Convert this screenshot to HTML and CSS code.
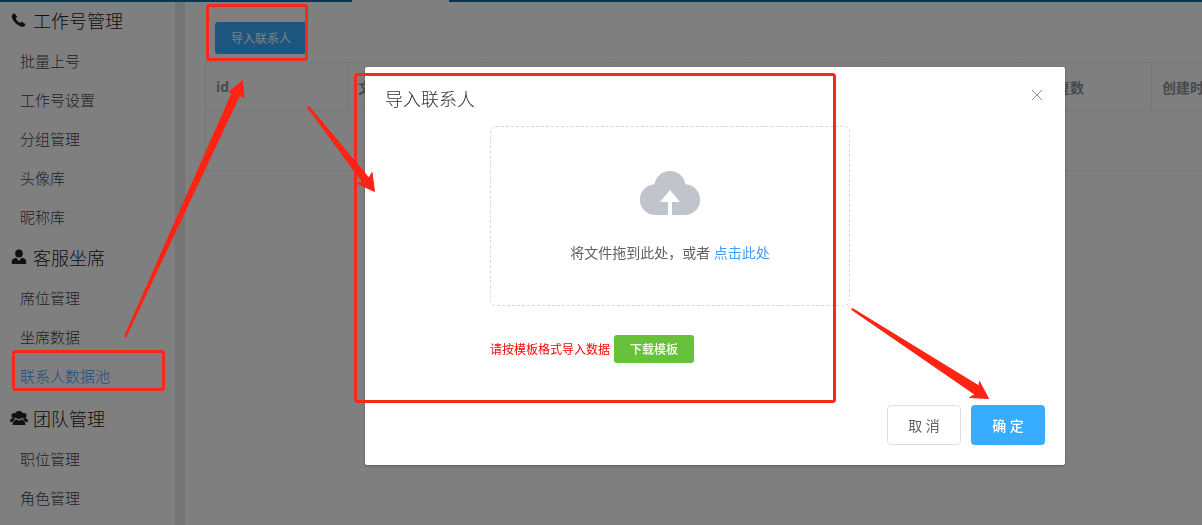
FILE: index.html
```html
<!DOCTYPE html>
<html lang="zh-CN">
<head>
    <meta charset="UTF-8">
    <meta name="viewport" content="width=device-width, initial-scale=1.0">
    <title>联系人数据池</title>
    <link rel="stylesheet" href="styles.css">
</head>
<body>
    <header class="topbar"><div class="topbar-tab"></div></header>
    <div class="layout">
        <nav class="sidebar">
            <section class="menu-group">
                <h2 class="menu-title">
                    <svg class="menu-icon" viewBox="0 0 18 18"><path d="M2.500 3.500 4.500 2l2.600 3.800-1.300 1.600c.8 2 2.200 3.300 4.300 4.400l1.800-1 3.800 2.400-1.400 2c-1.200.9-2.700.8-4.200.1C6.400 13.500 3.300 10.600 2.100 7 1.700 5.500 1.700 4.500 2.500 3.500z"/></svg>
                    工作号管理
                </h2>
                <a class="menu-item" href="#">批量上号</a>
                <a class="menu-item" href="#">工作号设置</a>
                <a class="menu-item" href="#">分组管理</a>
                <a class="menu-item" href="#">头像库</a>
                <a class="menu-item" href="#">昵称库</a>
            </section>
            <section class="menu-group">
                <h2 class="menu-title">
                    <svg class="menu-icon" viewBox="0 0 18 18"><ellipse cx="9" cy="5.500" rx="3.800" ry="4"/><path d="M1.800 16v-2.500c0-2 2-3.200 4.300-3.700L9 13l2.900-3.200c2.300.5 4.300 1.700 4.300 3.700V16z"/></svg>
                    客服坐席
                </h2>
                <a class="menu-item" href="#">席位管理</a>
                <a class="menu-item" href="#">坐席数据</a>
                <a class="menu-item active" href="#">联系人数据池</a>
            </section>
            <section class="menu-group">
                <h2 class="menu-title">
                    <svg class="menu-icon" viewBox="0 0 18 18"><circle cx="9" cy="6" r="4"/><path d="M2.500 16c0-3.200 1.700-4.800 4.300-5.400L9 11.800l2.200-1.200c2.600.6 4.300 2.200 4.300 5.400z"/><circle cx="4" cy="6.500" r="2.600"/><circle cx="14" cy="6.500" r="2.600"/><path d="M0 13c0-2.400.8-3.500 3-4l2.800 1.200C4 10.800 3 11.700 2.500 13zM18 13c0-2.400-.8-3.500-3-4l-2.800 1.200c1.800.6 2.800 1.500 3.300 2.800z"/></svg>
                    团队管理
                </h2>
                <a class="menu-item" href="#">职位管理</a>
                <a class="menu-item" href="#">角色管理</a>
            </section>
        </nav>

        <main class="content">
            <div class="toolbar">
                <button type="button" class="btn btn-import">导入联系人</button>
            </div>
            <div class="table-wrap">
                <table class="data-table">
                    <thead>
                        <tr>
                            <th class="col-id">id</th>
                            <th>文</th>
                            <th></th>
                            <th></th>
                            <th></th>
                            <th></th>
                            <th>去重复数</th>
                            <th>创建时间</th>
                        </tr>
                    </thead>
                    <tbody>
                        <tr><td colspan="8"></td></tr>
                    </tbody>
                </table>
            </div>
        </main>
    </div>

    <div class="overlay">
        <div class="modal" role="dialog" aria-labelledby="modalTitle">
            <div class="modal-header">
                <h3 class="modal-title" id="modalTitle">导入联系人</h3>
                <button type="button" class="modal-close" aria-label="关闭">
                    <svg viewBox="0 0 12 12"><path d="M1 1l10 10M11 1L1 11"/></svg>
                </button>
            </div>
            <div class="modal-body">
                <div class="upload-box">
                    <svg class="upload-icon" viewBox="0 0 60 46"><path d="M28 45H16A15.400 15.400 0 0 1 14.500 14.200 15.700 15.700 0 0 1 45.500 14.200 15.400 15.400 0 0 1 44 45H32V32h8L30 20 20 32h8z"/></svg>
                    <p class="upload-text">将文件拖到此处，或者 <a href="#">点击此处</a></p>
                </div>
                <div class="template-row">
                    <span class="template-tip">请按模板格式导入数据</span>
                    <button type="button" class="btn btn-template">下载模板</button>
                </div>
            </div>
            <div class="modal-footer">
                <button type="button" class="btn btn-cancel">取 消</button>
                <button type="button" class="btn btn-confirm">确 定</button>
            </div>
        </div>
    </div>

    <!-- step markers -->
    <svg class="guide" width="1202" height="525" viewBox="0 0 1202 525">
        <g class="guide-box">
            <rect x="207.500" y="5.500" width="99" height="54" rx="2"/>
            <rect x="13.500" y="351.500" width="150" height="38" rx="2"/>
            <rect x="355.500" y="74.500" width="479" height="327" rx="2"/>
        </g>
        <g class="guide-arrow">
            <path d="M124.500 336.500 232 93l-3-1 13.500-11.500 1.500 17-4.500-2L126 337z"/>
            <path d="M307.500 107.500 309 106.500 369 178l3-5.500 2.500 19-17-8 5-1.500z"/>
            <path d="M851.500 309.500 852.500 308.500 979 386l.5-4.500 9 17-19-1 5.500-3z"/>
        </g>
    </svg>
</body>
</html>
```
FILE: styles.css
```css
* {
    box-sizing: border-box;
}
body {
    margin: 0;
    height: 100vh;
    overflow: hidden;
    display: flex;
    flex-direction: column;
    background-color: #fff;
    color: #606266;
    font-family: "Open Sans", "Noto Sans CJK SC", sans-serif;
    font-size: 14px;
}
a {
    color: #409eff;
    text-decoration: none;
}
.topbar {
    flex: none;
    height: 2px;
    padding-left: 352px;
    background-color: #0070b8;
}
.topbar-tab {
    width: 97px;
    height: 2px;
    background-color: #fff;
}
.layout {
    flex: 1;
    min-height: 0;
    display: flex;
}
.sidebar {
    flex: none;
    width: 185px;
    border-right: 10px solid #e8e8e8;
    overflow: hidden;
    font-weight: 300;
}
.menu-group + .menu-group {
    margin-top: 2px;
}
.menu-title {
    display: flex;
    align-items: center;
    gap: 5px;
    height: 40px;
    margin: 0;
    padding: 0 0 4px 10px;
    font-size: 18px;
    font-weight: 300;
    color: #222;
}
.menu-icon {
    width: 18px;
    height: 18px;
    fill: #222;
}
.menu-item {
    display: block;
    padding-left: 20px;
    font-size: 15px;
    line-height: 39px;
    color: #444;
}
.menu-item.active {
    margin-bottom: 4px;
    color: #409eff;
}
.content {
    flex: 1;
    min-width: 0;
    padding: 20px 0 0 20px;
}
.toolbar {
    padding: 0 10px 8px;
}
.btn {
    display: inline-block;
    border: 1px solid transparent;
    border-radius: 3px;
    font-family: inherit;
    color: #fff;
    cursor: pointer;
}
.btn-import {
    display: block;
    height: 32px;
    padding: 0 15px;
    font-size: 12px;
    background-color: #38adff;
}
.table-wrap {
    overflow: hidden;
}
.data-table {
    width: 1081px;
    table-layout: fixed;
    border-collapse: collapse;
}
.data-table th {
    height: 48px;
    padding: 0 10px;
    border: 1px solid #ebeef5;
    text-align: left;
    color: #909399;
}
.data-table .col-id {
    width: 142px;
}
.data-table td {
    height: 60px;
    border: 1px solid #ebeef5;
}
.overlay {
    position: fixed;
    inset: 0;
    padding: 67px 20px 0 365px;
    background-color: rgba(0, 0, 0, 0.5);
}
.modal {
    max-width: 700px;
    background-color: #fff;
    border-radius: 2px;
    box-shadow: 0 1px 3px rgba(0, 0, 0, 0.3);
}
.modal-header {
    display: flex;
    justify-content: space-between;
    padding: 20px 20px 15px;
}
.modal-title {
    margin: 0;
    font-size: 18px;
    font-weight: 300;
    line-height: 24px;
    color: #303133;
}
.modal-close {
    width: 16px;
    height: 16px;
    padding: 2px;
    border: none;
    background: none;
    cursor: pointer;
}
.modal-close svg {
    display: block;
    stroke: #909399;
    fill: none;
}
.modal-body {
    padding: 0 125px;
}
.upload-box {
    display: flex;
    flex-direction: column;
    align-items: center;
    max-width: 360px;
    height: 180px;
    padding-top: 43px;
    border: 1px dashed #d9d9d9;
    border-radius: 6px;
}
.upload-icon {
    width: 60px;
    height: 46px;
    fill: #c0c4cc;
}
.upload-text {
    margin: 27px 0 0;
    line-height: 20px;
}
.template-row {
    display: flex;
    align-items: center;
    gap: 4px;
    margin-top: 29px;
}
.template-tip {
    font-size: 12px;
    color: #f00;
}
.btn-template {
    width: 80px;
    height: 28px;
    padding: 0;
    font-size: 12px;
    font-weight: 500;
    background-color: #67c23a;
}
.modal-footer {
    display: flex;
    justify-content: flex-end;
    gap: 10px;
    padding: 42px 20px 20px;
}
.btn-cancel,
.btn-confirm {
    width: 74px;
    height: 40px;
    padding: 0;
    border-radius: 4px;
    font-size: 14px;
}
.btn-cancel {
    border-color: #dcdfe6;
    background-color: #fff;
    color: #606266;
}
.btn-confirm {
    background-color: #38adff;
    font-weight: 500;
}
.guide {
    position: absolute;
    top: 0;
    left: 0;
    pointer-events: none;
}
.guide-box {
    fill: none;
    stroke: #f5291c;
    stroke-width: 3;
}
.guide-arrow {
    fill: #ff2314;
    stroke: #ff2314;
    stroke-width: 1;
}
```
